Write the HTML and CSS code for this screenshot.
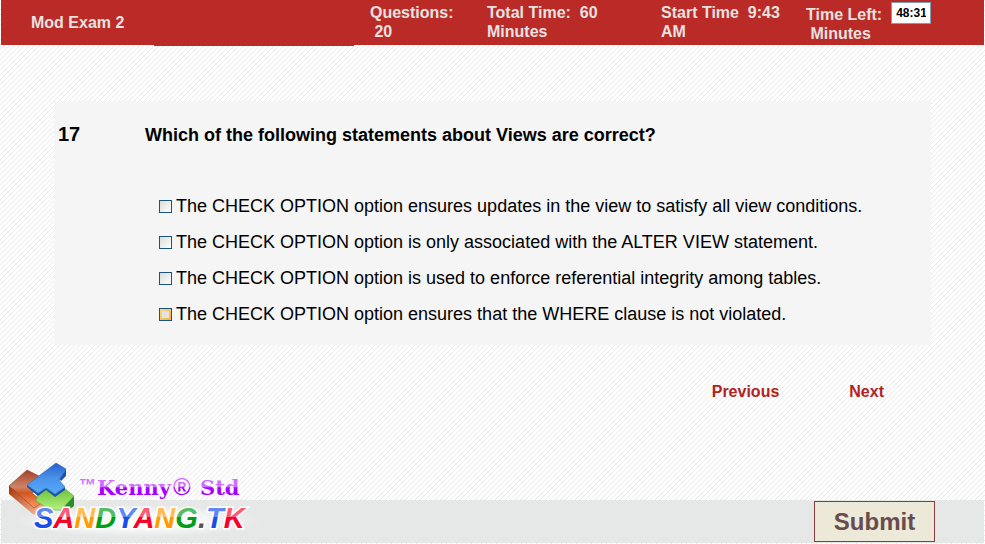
FILE: index.html
```html
<!DOCTYPE html>
<html lang="en">
<head>
<meta charset="utf-8">
<title>Mod Exam 2</title>
<link rel="stylesheet" href="styles.css">
</head>
<body>
<header class="topbar">
  <h1 class="exam-name">Mod Exam 2</h1>
  <p class="stat">Questions:<br>&nbsp;20</p>
  <p class="stat">Total Time: &nbsp;60<br>Minutes</p>
  <p class="stat">Start Time &nbsp;9:43<br>AM</p>
  <div class="stat stat-left">
    <label for="time-left">Time Left:<br>&nbsp;Minutes</label>
    <input class="clock" id="time-left" type="text" value="48:31" readonly>
  </div>
</header>
<main class="content">
  <form class="question" id="exam">
    <span class="number">17</span>
    <fieldset class="body">
      <legend class="prompt">Which of the following statements about Views are correct?</legend>
      <label class="option"><input class="check" type="checkbox">The CHECK OPTION option ensures updates in the view to satisfy all view conditions.</label>
      <label class="option"><input class="check" type="checkbox">The CHECK OPTION option is only associated with the ALTER VIEW statement.</label>
      <label class="option"><input class="check" type="checkbox">The CHECK OPTION option is used to enforce referential integrity among tables.</label>
      <label class="option"><input class="check check-hot" type="checkbox">The CHECK OPTION option ensures that the WHERE clause is not violated.</label>
    </fieldset>
  </form>
  <nav class="pager">
    <a class="page-link" href="#previous">Previous</a>
    <a class="page-link" href="#next">Next</a>
  </nav>
</main>
<footer class="bottombar">
  <svg class="logo" viewBox="0 0 260 84" role="img" aria-label="Kenny Std SANDYANG.TK">
    <defs>
      <linearGradient id="red" x1="0" y1="0" x2="0" y2="1"><stop offset="0" stop-color="#a04228"/><stop offset=".45" stop-color="#cf8468"/><stop offset=".6" stop-color="#d0561f"/><stop offset="1" stop-color="#ff9a66"/></linearGradient>
      <linearGradient id="side" x1="0" y1="0" x2="1" y2="1"><stop offset="0" stop-color="#a83208"/><stop offset="1" stop-color="#ffc09a"/></linearGradient>
      <linearGradient id="blue" x1="0" y1="0" x2="0" y2="1"><stop offset="0" stop-color="#2460c8"/><stop offset=".5" stop-color="#4a94ea"/><stop offset="1" stop-color="#56a8fa"/></linearGradient>
      <linearGradient id="green" x1="0" y1="0" x2="0" y2="1"><stop offset="0" stop-color="#6cc038"/><stop offset="1" stop-color="#b4f080"/></linearGradient>
      <linearGradient id="violet" gradientUnits="userSpaceOnUse" x1="0" y1="18" x2="0" y2="40"><stop offset=".47" stop-color="#d070ff"/><stop offset=".48" stop-color="#a800ff"/></linearGradient>
      <linearGradient id="s-blue" gradientUnits="userSpaceOnUse" x1="0" y1="46" x2="0" y2="70"><stop offset=".5" stop-color="#6288f2"/><stop offset=".51" stop-color="#174de8"/></linearGradient>
      <linearGradient id="s-red" gradientUnits="userSpaceOnUse" x1="0" y1="46" x2="0" y2="70"><stop offset=".5" stop-color="#fa5a76"/><stop offset=".51" stop-color="#f80028"/></linearGradient>
      <linearGradient id="s-gold" gradientUnits="userSpaceOnUse" x1="0" y1="46" x2="0" y2="70"><stop offset=".5" stop-color="#ffbd56"/><stop offset=".51" stop-color="#ff9d00"/></linearGradient>
      <linearGradient id="s-green" gradientUnits="userSpaceOnUse" x1="0" y1="46" x2="0" y2="70"><stop offset=".5" stop-color="#55bd62"/><stop offset=".51" stop-color="#009e14"/></linearGradient>
      <radialGradient id="glow"><stop offset=".4" stop-color="#fff" stop-opacity=".8"/><stop offset="1" stop-color="#fff" stop-opacity="0"/></radialGradient>
    </defs>
    <path d="M9 27v8l25 21 9-5V43z" fill="url(#side)"/>
    <path d="M27 11 9 27l25 22 9-6-11-9 4-3-8-5 11-9z" fill="url(#red)" stroke="#93381f" stroke-width=".6"/>
    <path d="M74 37v10l-11 8-3-4z" fill="#268d28"/>
    <path d="m38 35 9-6 8 7 9-7 10 8-13 14H50l-14-9z" fill="url(#green)" stroke="#52a92e" stroke-width=".6"/>
    <path d="M66 10v7l-5 5-2-2zM65 28v3l-10 7-9-7-8 6-11-9v-2l11 8 8-5 9 6z" fill="#1d54a8"/>
    <path d="M56 4 27 26l11 8 8-5 9 6 10-7-6-7 7-11z" fill="url(#blue)" stroke="#2866c0" stroke-width=".6"/>
    <ellipse cx="138" cy="62" rx="125" ry="16" fill="url(#glow)"/>
    <g fill="url(#violet)">
      <text class="mark" x="79" y="32">™</text>
      <text class="kenny" x="97" y="36">Kenny</text>
      <text class="registered" x="173" y="36">®</text>
      <text class="kenny" x="200" y="36">Std</text>
    </g>
    <text class="site" x="34" y="69"><tspan fill="url(#s-blue)">S</tspan><tspan fill="url(#s-red)">A</tspan><tspan fill="url(#s-gold)">N</tspan><tspan fill="url(#s-green)">D</tspan><tspan fill="url(#s-blue)">Y</tspan><tspan fill="url(#s-red)">A</tspan><tspan fill="url(#s-gold)">N</tspan><tspan fill="url(#s-green)">G</tspan><tspan fill="#555">.</tspan><tspan fill="url(#s-blue)">T</tspan><tspan fill="url(#s-red)">K</tspan></text>
  </svg>
  <button class="submit" type="submit" form="exam">Submit</button>
</footer>
</body>
</html>
```

FILE: styles.css
```css
* { box-sizing: border-box; }

body {
  margin: 0;
  min-height: 100vh;
  padding: 0 1px;
  display: flex;
  flex-direction: column;
  font-family: "Liberation Sans", Arial, sans-serif;
  color: #000;
  background: #fff linear-gradient(135deg, #fff 40%, #e9e9e9 41% 59%, #fff 60%) 0 0 / 5px 5px;
}

.topbar {
  position: relative;
  display: grid;
  grid-template-columns: 339fr 117fr 174fr 145fr 178fr;
  height: 45px;
  padding-left: 30px;
  background: #ba2b27;
  color: #e6e2e0;
}

.topbar::after {
  content: "";
  position: absolute;
  top: 100%;
  left: 153px;
  width: 200px;
  height: 1px;
  background: #ba2b27;
}

.exam-name, .stat {
  margin: 0;
  font-size: 16px;
  font-weight: bold;
  line-height: 19px;
}

.exam-name { align-self: center; }
.stat { padding-top: 3px; white-space: nowrap; }

.stat-left {
  display: flex;
  align-items: flex-start;
  gap: 9px;
  padding-top: 2px;
}

.stat-left label { padding-top: 3px; }

.clock {
  width: 40px;
  height: 22px;
  padding: 0 4px;
  border: 1px solid #7f9db9;
  background: #fff;
  color: #000;
  font: bold 12px "Liberation Sans", Arial, sans-serif;
}

.content {
  flex: 1;
  padding: 56px 53px 0;
}

.question {
  display: grid;
  grid-template-columns: 87px 1fr;
  min-height: 244px;
  padding: 21px 4px 12px;
  background: #f5f5f5;
}

.number {
  font-size: 20px;
  font-weight: bold;
  line-height: 24px;
}

.body {
  min-width: 0;
  margin: 0;
  padding: 0;
  border: 0;
}

.prompt {
  padding: 0 0 40px;
  font-size: 18px;
  font-weight: bold;
  line-height: 26px;
}

.option {
  display: flex;
  align-items: center;
  gap: 4px;
  height: 36px;
  padding-left: 14px;
  font-size: 18px;
}

.check {
  appearance: none;
  flex: none;
  width: 13px;
  height: 13px;
  margin: 0;
  border: 1px solid #1c5180;
  background: linear-gradient(135deg, #dcdcd7, #fff);
}

.check-hot {
  background: linear-gradient(#e4e4e0, #e4e4e0) center / 7px 7px no-repeat, linear-gradient(135deg, #fdd889, #f8b330);
}

.pager {
  display: flex;
  justify-content: flex-end;
  gap: 70px;
  padding: 37px 47px 0 0;
}

.page-link {
  color: #b22222;
  font-size: 16px;
  font-weight: bold;
  line-height: 20px;
  text-decoration: none;
}

.bottombar {
  position: relative;
  display: flex;
  justify-content: flex-end;
  height: 43px;
  margin-bottom: 1px;
  padding: 1px 49px 1px 0;
  background: #e6e8e7;
}

.submit {
  width: 121px;
  padding: 0;
  border: 1px solid #8b3a3a;
  background: #ece9d8;
  color: #684c4e;
  font: bold 24px "Liberation Sans", Arial, sans-serif;
}

.logo {
  position: absolute;
  left: -1px;
  bottom: 0;
  width: 260px;
  height: 84px;
}

.mark { font: bold 17px "Liberation Sans", sans-serif; }
.kenny { font: bold 21px "DejaVu Serif", serif; }
.registered { font: bold 24px "Liberation Sans", sans-serif; }

.site {
  font: italic bold 29px "Liberation Sans", sans-serif;
  stroke: #fff;
  stroke-width: 3px;
  paint-order: stroke;
}
```
